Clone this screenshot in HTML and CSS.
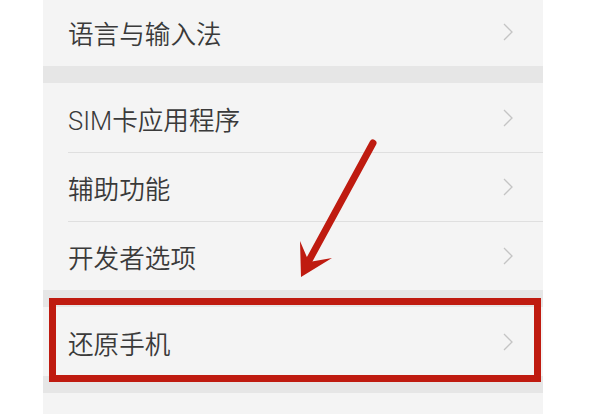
FILE: index.html
```html
<!DOCTYPE html>
<html lang="zh-CN">
<head>
  <meta charset="UTF-8" />
  <meta name="viewport" content="width=device-width, initial-scale=1.0" />
  <title>设置</title>
  <link rel="stylesheet" href="styles.css">
</head>
<body>
  <div class="settings">
    <div class="group">
      <div class="item">
        <span class="label">语言与输入法</span>
        <svg class="chev" viewBox="0 0 10 18"><polyline points="1,1 9,9 1,17" /></svg>
      </div>
    </div>
    <div class="group">
      <div class="item">
        <span class="label">SIM卡应用程序</span>
        <svg class="chev" viewBox="0 0 10 18"><polyline points="1,1 9,9 1,17" /></svg>
      </div>
      <div class="item">
        <span class="label">辅助功能</span>
        <svg class="chev" viewBox="0 0 10 18"><polyline points="1,1 9,9 1,17" /></svg>
      </div>
      <div class="item">
        <span class="label">开发者选项</span>
        <svg class="chev" viewBox="0 0 10 18"><polyline points="1,1 9,9 1,17" /></svg>
      </div>
    </div>
    <div class="group">
      <div class="item">
        <span class="label">还原手机</span>
        <svg class="chev" viewBox="0 0 10 18"><polyline points="1,1 9,9 1,17" /></svg>
      </div>
    </div>
    <div class="group">
      <div class="item item-cut"></div>
    </div>
  </div>

  <!-- 标注：红框和箭头 -->
  <div class="highlight"></div>
  <svg class="arrow" viewBox="0 0 592 414">
    <line x1="373" y1="143" x2="306" y2="266" />
    <polygon points="301,277 300,241 309,262 332,258" />
  </svg>
</body>
</html>
```

FILE: styles.css
```css
body {
  margin: 0;
  padding: 0;
  background: #fff;
  font-family: 'Roboto', 'Noto Sans CJK SC', sans-serif;
  height: 414px;
  overflow: hidden;
  position: relative;
}
.settings {
  width: 500px;
  margin: -3px 0 0 43px;
  background: #e6e6e6;
  display: flex;
  flex-direction: column;
  gap: 17px;
}
.group {
  background: #f4f4f4;
  padding-left: 25px;
}
.item {
  height: 69px;
  box-sizing: border-box;
  display: flex;
  align-items: center;
  justify-content: space-between;
  padding-right: 30px;
}
.item + .item {
  border-top: 1px solid #dfdfdf;
}
.item-cut {
  height: 21px;
}
.label {
  font-size: 25.6px;
  font-weight: 350;
  color: #3a3a3a;
  padding-top: 1px;
}
.chev {
  width: 10px;
  height: 18px;
  fill: none;
  stroke: #c4c4c4;
  stroke-width: 1.3;
}
.highlight {
  position: absolute;
  left: 49px;
  top: 298px;
  width: 492px;
  height: 84px;
  box-sizing: border-box;
  border: 7px solid #bf1b10;
}
.arrow {
  position: absolute;
  left: 0;
  top: 0;
  width: 592px;
  height: 414px;
}
.arrow line {
  stroke: #bf1b10;
  stroke-width: 7;
  stroke-linecap: round;
}
.arrow polygon {
  fill: #bf1b10;
}
```
